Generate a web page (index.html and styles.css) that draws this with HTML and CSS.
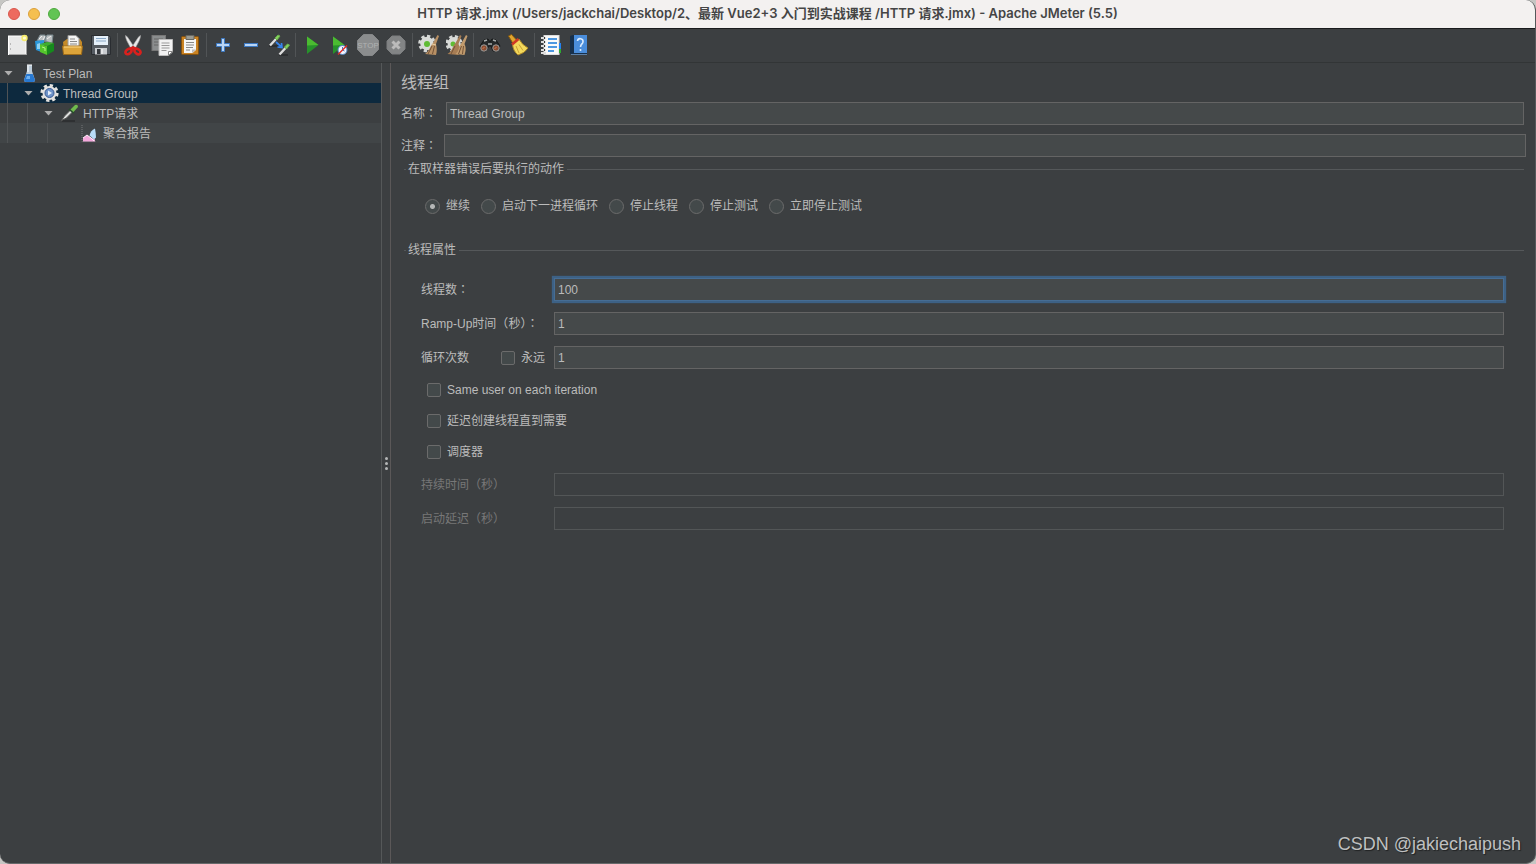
FILE: index.html
```html
<!DOCTYPE html>
<html lang="zh-CN">
<head>
<meta charset="utf-8">
<title>Apache JMeter (5.5)</title>
<link rel="stylesheet" href="styles.css">
</head>
<body>
<div class="window">
  <header class="titlebar">
    <div class="lights">
      <button class="light light-close" aria-label="关闭"></button>
      <button class="light light-min" aria-label="最小化"></button>
      <button class="light light-max" aria-label="缩放"></button>
    </div>
    <h1 class="title">HTTP 请求.jmx (/Users/jackchai/Desktop/2、最新 Vue2+3 入门到实战课程 /HTTP 请求.jmx) - Apache JMeter (5.5)</h1>
  </header>

  <nav class="toolbar" aria-label="工具栏">
    <button class="tool" aria-label="新建"><svg viewBox="0 0 22 22"><rect x="2.500" y="2" width="17.500" height="18.500" fill="#e9e9e9" stroke="#fff"/><path d="M3 20.500H20" stroke="#aaa"/><path d="M4 10h1M4 15h1" stroke="#888"/><circle cx="18.500" cy="4" r="3.200" fill="#f4e96c"/><circle cx="18.500" cy="4" r="1.600" fill="#fffbd0"/></svg></button>
    <button class="tool" aria-label="模板"><svg viewBox="0 0 22 22"><path d="M3 7 6 1h5l1 6zM10 7l3-6h6l-1 8z" fill="#b9bdbf" stroke="#77868c"/><path d="M5 5l3-3M13 5l4-3M9 6l2-4" stroke="#eee"/><path d="M1 7l9-1v13l-8-3z" fill="#2a97da"/><path d="M3 10l3-1v6H3z" fill="#8cd0f2"/><path d="M6 10l7 2v9l-7-3z" fill="#55c62c"/><path d="M13 12l7-3v8l-7 4z" fill="#168a1d"/><path d="M6 10l7-2 7 1-7 3z" fill="#3fae2f"/><path d="M8 13l3 1v3" fill="none" stroke="#b5f48c"/></svg></button>
    <button class="tool" aria-label="打开"><svg viewBox="0 0 22 22"><path d="M1 8l4-3h13l2 3v10H2z" fill="#c58a28"/><path d="M6 1.500h8l3 3V14H6z" fill="#f4f4f4" stroke="#999"/><path d="M8 5h5M8 7.500h7M8 10h7" stroke="#888"/><path d="M.500 12h20l-1 8.500H1.500z" fill="#dda43a" stroke="#9e6b18"/><path d="M2 13h17" stroke="#ffd884"/></svg></button>
    <button class="tool" aria-label="保存"><svg viewBox="0 0 22 22"><path d="M1.500 1.500h17.500l1.500 2v17h-19z" fill="#555b62" stroke="#2a2d31"/><rect x="4" y="2" width="14" height="9" fill="#e5f0fa"/><path d="M6 4.500h10M6 7h10" stroke="#8aa8c6"/><rect x="5" y="14" width="12" height="6.500" fill="#c9ccd0"/><rect x="7" y="15" width="3.500" height="5" fill="#33373c"/><path d="M12 15v5" stroke="#fff"/></svg></button>
    <span class="sep"></span>
    <button class="tool" aria-label="剪切"><svg viewBox="0 0 22 22"><path d="M2.500 1.500q2 1 3 3l6 9-3 2L4 7Q2.500 4 2.500 1.500zM17.500 1.500q-2 1-3 3l-6 9 3 2L16 7q1.500-3 1.500-5.500z" fill="#e8e8e8" stroke="#aaa" stroke-width=".6"/><g fill="none" stroke="#d9201d" stroke-width="2.600"><ellipse cx="5.500" cy="17.500" rx="3.300" ry="2.300" transform="rotate(-40 5.500 17.500)"/><ellipse cx="14.500" cy="17.500" rx="3.300" ry="2.300" transform="rotate(40 14.500 17.500)"/><path d="M7 15l3-1.500 3 1.500"/></g></svg></button>
    <button class="tool" aria-label="复制"><svg viewBox="0 0 22 22"><rect x="1" y="1.500" width="13.500" height="15" fill="#8a8d8e" stroke="#777"/><path d="M3 5h9M3 8h5M3 11h5" stroke="#666"/><path d="M8 5.500h13.500V18l-4 3.500H8z" fill="#f2f2f2" stroke="#bbb"/><path d="M10.500 9h8M10.500 11.500h8M10.500 14h8M10.500 16.500h5" stroke="#999"/><path d="M17.500 21.500v-4h4z" fill="#fff" stroke="#888"/></svg></button>
    <button class="tool" aria-label="粘贴"><svg viewBox="0 0 22 22"><rect x="2.500" y="2.500" width="17" height="18" rx="1" fill="#c98222" stroke="#83510f"/><path d="M5 5h12v11l-3.500 3H5z" fill="#f5f5f5"/><path d="M7 1.500h8v4H7z" fill="#9a9a92" stroke="#686862"/><path d="M7 8.500h8M7 11h8M7 13.500h7M7 16h4" stroke="#888"/><path d="M13 19v-3.500h4z" fill="#bbb"/></svg></button>
    <span class="sep"></span>
    <button class="tool" aria-label="展开"><svg viewBox="0 0 22 22"><path d="M9.500 4.500h3v5h5v3h-5v5h-3v-5h-5v-3h5z" fill="#b9d5f5" stroke="#3d79c2"/></svg></button>
    <button class="tool" aria-label="折叠"><svg viewBox="0 0 22 22"><rect x="4.500" y="9.500" width="13" height="3" fill="#b9d5f5" stroke="#3d79c2"/></svg></button>
    <button class="tool" aria-label="切换"><svg viewBox="0 0 22 22"><path d="M1 12h10M11 21h9" stroke="#292b2c" stroke-width="1.500"/><path d="M2 11.500 8 5M11.500 20.500l6-6.500" stroke="#ddd" stroke-width="2.400"/><path d="M7 4l3-3 2 1-3 4zM16.500 13l3-3 2 1-3 4z" fill="#84d35e" stroke="#69ad4c"/><path d="M8 8l5 4.500M9.500 13l4.500.500-.500-4.500" fill="none" stroke="#3684ed" stroke-width="1.700"/></svg></button>
    <span class="sep"></span>
    <button class="tool" aria-label="启动"><svg viewBox="0 0 22 22"><path d="M6 2.500v17.500L17.500 11z" fill="#27912b"/><path d="M6 2.500v9l11.500-.500z" fill="#4bbb31"/></svg></button>
    <button class="tool" aria-label="不停顿开始"><svg viewBox="0 0 22 22"><path d="M4 2.500v17.500L15.500 11z" fill="#27912b"/><path d="M4 2.500v9l11.500-.500z" fill="#4bbb31"/><circle cx="13.500" cy="16" r="4.500" fill="#f2f5ff" stroke="#5183bf"/><path d="M13.500 13v3l2 1" fill="none" stroke="#447bc1"/><path d="M9 20.500l9-9" stroke="#e12d25" stroke-width="1.500"/></svg></button>
    <button class="tool" aria-label="停止" disabled><svg viewBox="0 0 22 22"><path d="M6.500.5h9l6 6v9l-6 6h-9l-6-6v-9z" fill="#8b8d8e" stroke="#858788"/><text x="11" y="14" class="stop-text">STOP</text></svg></button>
    <button class="tool" aria-label="关闭线程" disabled><svg viewBox="0 0 22 22"><path d="M7 2h8l5 5v8l-5 5H7l-5-5V7z" fill="#828485" stroke="#7d7f80"/><path d="M7.500 7.500l7 7M14.500 7.500l-7 7" stroke="#bbb" stroke-width="3"/></svg></button>
    <span class="sep"></span>
    <button class="tool" aria-label="清除"><svg viewBox="0 0 22 22"><circle cx="9" cy="9.500" r="7.300" fill="none" stroke="#d5d7d5" stroke-width="3" stroke-dasharray="3.200 2.500"/><circle cx="9" cy="9.500" r="6.800" fill="#d9dbd8"/><circle cx="9" cy="10" r="3" fill="#60bc35"/><path d="M19.500 1l1.500 1-3 8c1 4 1 8 0 11l-11-1c4-2 5-8 8-11z" fill="#b89064"/><path d="M14 12l-4 8M16.500 12l-2 8" stroke="#735237"/><path d="M14 10l4 1" stroke="#ead0a7"/></svg></button>
    <button class="tool" aria-label="清除全部"><svg viewBox="0 0 22 22"><circle cx="8" cy="9.500" r="7" fill="none" stroke="#d5d7d5" stroke-width="3" stroke-dasharray="3.200 2.400"/><circle cx="8" cy="9.500" r="6.500" fill="#d9dbd8"/><circle cx="7" cy="10" r="2.500" fill="#60bc35"/><path d="M14 1l1.500 1-3 8c2 4 1 8 0 11l-11-1c5-3 5-8 8-11z" fill="#a77d54"/><path d="M20 1l1.500 1-3 8c2 4 1 8 0 11l-9-1c4-3 3-8 6-11z" fill="#c19b6d"/><path d="M9 12l-4 8M15.500 12l-3 8M17.500 12l-1 8" stroke="#735237"/></svg></button>
    <span class="sep"></span>
    <button class="tool" aria-label="搜索"><svg viewBox="0 0 22 22"><path d="M1 12 5 6l4-1 2 3 2-3 4 1 4 6-3 5h-4l-2-5h-2l-3 5H4z" fill="#25292a" stroke="#171919"/><path d="M5 7l3-1M14 6l3 1M9 10h4" stroke="#a5aaaa" stroke-width="1.500"/><circle cx="5" cy="14" r="3.200" fill="#8c4e32" stroke="#969b9c"/><circle cx="17" cy="14" r="3.200" fill="#8c4e32" stroke="#969b9c"/><path d="M3.500 15l2-2M15.500 15l2-2" stroke="#d47e55"/></svg></button>
    <button class="tool" aria-label="重置搜索"><svg viewBox="0 0 22 22"><path d="M1.500 2l3-1.500 5.500 6-4 3z" fill="#e0a52f" stroke="#8b5d0d"/><path d="M5.500 10l6.500-5q3 6 9 9-3 5-10 7-5-4-5.500-11z" fill="#f3d95c" stroke="#ae8928"/><path d="M5 10.500l6.500-5.500" stroke="#cf3925" stroke-width="2.600"/><path d="M9 12l3 7M12 10.500l4 6" stroke="#c9a233"/></svg></button>
    <span class="sep"></span>
    <button class="tool" aria-label="函数助手"><svg viewBox="0 0 22 22"><rect x="4" y="1.500" width="15" height="19" fill="#fafafa" stroke="#ddd"/><path d="M19 9h2v6h-2z" fill="#2681ef"/><path d="M19 15h2v4h-2z" fill="#2dab32"/><path d="M8 5h9M8 9h9M8 13h9M8 17h6" stroke="#1678d9" stroke-width="1.300"/><path d="M1 4h5M1 8h5M1 12h5M1 16h5M1 19h5" stroke="#ddd" stroke-width="2"/><path d="M4.500 3v2M4.500 7v2M4.500 11v2M4.500 15v2" stroke="#333"/></svg></button>
    <button class="tool" aria-label="帮助"><svg viewBox="0 0 22 22"><path d="M2 2l3-1h14v19H2z" fill="#17304c"/><path d="M6 1h13v18H6z" fill="#4a8ddb"/><path d="M3 20.500h16" stroke="#5c7fa6"/><path d="M9.500 7C10 3.500 15.500 4 15 8c-.3 2-2.500 2-2.500 5M12.500 15v2" fill="none" stroke="#d9ebff" stroke-width="1.600"/></svg></button>
  </nav>

  <div class="workspace">
    <aside class="tree-pane">
      <ul class="tree">
        <li class="node"><span class="arrow"></span><svg class="node-icon" viewBox="0 0 20 20"><path d="M7 2h5v6l3 9q0 2-2 2H6q-2 0-2-2l3-9z" fill="#bccbd8"/><path d="M6.300 11h6.400l2.300 6q0 2-2 2H6q-2 0-2-2z" fill="#2878d0"/><path d="M7 2h5M8 3v6" stroke="#fff"/><path d="M7 13h3v3H6z" fill="#6eb0f0"/></svg><span class="node-text">Test Plan</span></li>
        <li class="node selected"><span class="guide"></span><span class="arrow"></span><svg class="node-icon" viewBox="0 0 20 20"><circle cx="9.500" cy="10" r="7.600" fill="none" stroke="#e5e2de" stroke-width="3" stroke-dasharray="3.200 2.769"/><circle cx="9.500" cy="10" r="7" fill="#e2e1e0"/><circle cx="9.500" cy="10" r="4.500" fill="#6f93c9" stroke="#385b94"/><path d="M8 7.500l4 2.500-4 2.500z" fill="#e4eefb"/></svg><span class="node-text">Thread Group</span></li>
        <li class="node"><span class="guide"></span><span class="guide"></span><span class="arrow"></span><svg class="node-icon" viewBox="0 0 20 20"><path d="M2 18h13" stroke="#2a2d2e" stroke-width="1.500"/><path d="M1.500 17.500l3-4.500 6-6 2 2-6 6z" fill="#dcdedc" stroke="#555"/><path d="M9 6l5 4" stroke="#294e2d" stroke-width="2"/><path d="M10.500 6.500 15 2q3-1 3 2l-4.500 5z" fill="#6fba4d"/></svg><span class="node-text">HTTP请求</span></li>
        <li class="node striped"><span class="guide"></span><span class="guide"></span><span class="guide"></span><span class="leaf"></span><svg class="node-icon" viewBox="0 0 20 20"><path d="M2 2v16.500h14" fill="none" stroke="#77797a" stroke-dasharray="1 1"/><path d="M3 18.500V15l4-3 3 2 5 2.500v2z" fill="#f4a8dc"/><path d="M9.500 12.500q1-5 5.500-7 1 5 1 9l-2 2z" fill="#b9dcf8"/><path d="M3 15l4-3 4 3 3 3" fill="none" stroke="#fdf0fa"/></svg><span class="node-text">聚合报告</span></li>
      </ul>
    </aside>
    <div class="divider"><i></i><i></i><i></i></div>

    <main class="panel">
      <h2 class="heading">线程组</h2>
      <div class="row name-row"><label for="name">名称<span class="punct" lang="zh-TW">：</span></label><input class="field" id="name" type="text" value="Thread Group"></div>
      <div class="row"><label for="comment">注释<span class="punct" lang="zh-TW">：</span></label><input class="field" id="comment" type="text"></div>

      <fieldset class="group">
        <legend>在取样器错误后要执行的动作</legend>
        <div class="radios">
          <label class="choice"><input type="radio" name="action" checked>继续</label>
          <label class="choice"><input type="radio" name="action">启动下一进程循环</label>
          <label class="choice"><input type="radio" name="action">停止线程</label>
          <label class="choice"><input type="radio" name="action">停止测试</label>
          <label class="choice"><input type="radio" name="action">立即停止测试</label>
        </div>
      </fieldset>

      <fieldset class="group props">
        <legend>线程属性</legend>
        <div class="grid">
          <label for="threads">线程数<span class="punct" lang="zh-TW">：</span></label>
          <input class="field focused" id="threads" type="text" value="100">
          <label for="ramp">Ramp-Up时间<span class="punct" lang="zh-TW">（</span>秒<span class="punct" lang="zh-TW">）：</span></label>
          <input class="field" id="ramp" type="text" value="1">
          <div class="loop"><label for="loops">循环次数</label><label class="choice"><input type="checkbox">永远</label></div>
          <input class="field" id="loops" type="text" value="1">
        </div>
        <div class="checks">
          <label class="choice"><input type="checkbox">Same user on each iteration</label>
          <label class="choice"><input type="checkbox">延迟创建线程直到需要</label>
          <label class="choice"><input type="checkbox">调度器</label>
        </div>
        <div class="grid off">
          <label for="duration">持续时间<span class="punct" lang="zh-TW">（</span>秒<span class="punct" lang="zh-TW">）</span></label>
          <input class="field" id="duration" type="text" disabled>
          <label for="delay">启动延迟<span class="punct" lang="zh-TW">（</span>秒<span class="punct" lang="zh-TW">）</span></label>
          <input class="field" id="delay" type="text" disabled>
        </div>
      </fieldset>
    </main>
  </div>
  <div class="watermark">CSDN @jakiechaipush</div>
</div>
</body>
</html>
```
FILE: styles.css
```css
* { box-sizing: border-box; }

body {
  margin: 0;
  background: #c6c6c3;
  color: #bbbbbb;
  font: 12px/16px "Liberation Sans", "Noto Sans CJK SC", sans-serif;
}

button, input { font: inherit; color: inherit; margin: 0; padding: 0; }
h1, h2, ul { margin: 0; padding: 0; }

.window {
  position: relative;
  display: flex;
  flex-direction: column;
  min-height: 100vh;
  background: #3c3f41;
  border-radius: 10px;
  border-right: 1px solid #55585a;
  border-bottom: 1px solid #66696a;
  overflow: hidden;
}

/* Title bar */
.titlebar {
  display: grid;
  grid-template-columns: 80px 1fr 80px;
  align-items: center;
  height: 29px;
  background: #f3f1f0;
  border-bottom: 1px solid #191b1d;
}
.lights { display: flex; gap: 8px; padding-left: 8px; }
.light { width: 12px; height: 12px; border: 1px solid #d9574d; border-radius: 50%; background: #ed6a5f; }
.light-min { border-color: #dba03b; background: #f5bf4f; }
.light-max { border-color: #4eaa3e; background: #61c454; }
.title {
  padding-bottom: 2px;
  color: #454545;
  font: 600 13px/20px Inter, "Noto Sans CJK SC", sans-serif;
  text-align: center;
  white-space: nowrap;
}

/* Toolbar */
.toolbar {
  display: flex;
  align-items: center;
  height: 34px;
  padding: 0 0 2px 3px;
  border-bottom: 1px solid #323536;
}
.tool {
  display: flex;
  align-items: center;
  justify-content: center;
  width: 28px;
  height: 28px;
  border: 0;
  background: none;
}
.tool svg { width: 22px; height: 22px; }
.stop-text { font: 8px "Liberation Sans", sans-serif; fill: #b0b2b2; text-anchor: middle; }
.sep { width: 1px; height: 24px; margin: 0 2px; background: #515456; }

/* Split view */
.workspace { display: flex; flex: 1; }
.tree-pane { width: 382px; border-right: 1px solid #555859; }
.tree { list-style: none; }
.node { display: flex; align-items: center; height: 20px; }
.node.selected { background: #0d293e; }
.node.striped { background: #414547; }
.guide { width: 20px; height: 20px; padding-left: 7px; }
.guide::before { content: ""; display: block; width: 1px; height: 20px; background: #505355; }
.arrow, .leaf { width: 20px; padding-left: 4px; }
.arrow::before {
  content: "";
  display: block;
  width: 9px;
  height: 5px;
  background: #adadad;
  clip-path: polygon(0 0, 100% 0, 50% 100%);
}
.node-icon { width: 20px; height: 20px; margin-right: 3px; }
.node-text { padding-top: 2px; }

.divider {
  display: flex;
  flex-direction: column;
  align-items: center;
  justify-content: center;
  gap: 2px;
  width: 9px;
  border-right: 1px solid #5b5858;
}
.divider i { width: 3px; height: 3px; border-radius: 50%; background: #b5b7b7; }

/* Thread group form */
.panel { flex: 1; padding: 10px 9px 10px 10px; }
.heading { font-size: 16px; font-weight: 400; line-height: 20px; }
.row { display: flex; align-items: center; margin-top: 9px; }
.row label { width: 43px; }
.name-row { padding-right: 2px; }
.name-row label { width: 45px; }
.punct { font-family: "Noto Sans CJK TC", sans-serif; }
.field {
  flex: 1;
  width: 100%;
  height: 23px;
  padding: 0 3px;
  border: 1px solid #646464;
  background: #45494a;
  outline: none;
}
.focused { border-color: #466d94; box-shadow: 0 0 0 1px #3d6185, 0 0 1px 2px #3d6185; }
.field:disabled { border-color: #535657; background: none; }

.group {
  min-width: 0;
  margin: 4px 2px 0 3px;
  padding: 0;
  border: 0;
  border-top: 1px solid #55585a;
}
.group legend { margin-left: 2px; padding: 0 3px 0 2px; }
.radios { display: flex; gap: 11px; height: 24px; margin: 17px 21px 0; }
.choice { display: flex; align-items: center; gap: 6px; }
.choice input {
  appearance: none;
  width: 14px;
  height: 14px;
  border: 1px solid #6b6b6b;
  border-radius: 2px;
  background: #43494a;
}
.choice input[type="radio"] { width: 15px; height: 15px; border-radius: 50%; }
.choice input[type="radio"]:checked {
  background: radial-gradient(circle, #b5b7b7 2px, #43494a 3px);
}

.props { margin-top: 24px; }
.grid {
  display: grid;
  grid-template-columns: 133px 1fr;
  row-gap: 11px;
  align-items: center;
  margin: 20px 20px 0 17px;
}
.loop { display: flex; justify-content: space-between; padding-right: 9px; }
.checks { margin: 5px 0 6px 23px; }
.checks .choice { height: 31px; }
.grid.off { margin-top: 0; color: #777777; }

.watermark {
  position: absolute;
  right: 14px;
  bottom: 9px;
  color: #bfc0c0;
  font-size: 18px;
  line-height: 20px;
  text-shadow: 1px 1px 1px #202223;
}
```
